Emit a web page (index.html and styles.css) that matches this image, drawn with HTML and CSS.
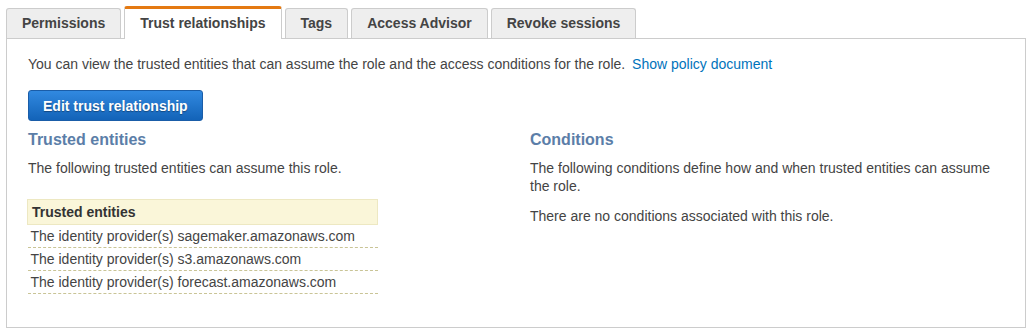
FILE: index.html
```html
<!DOCTYPE html>
<html lang="en">
  <head>
    <meta charset="UTF-8" />
    <title>Role - Trust relationships</title>
    <link rel="stylesheet" href="styles.css">
  </head>
  <body>
    <div class="page">
      <!-- Tab strip -->
      <ul class="tabs">
        <li class="tab">Permissions</li>
        <li class="tab active">Trust relationships</li>
        <li class="tab">Tags</li>
        <li class="tab">Access Advisor</li>
        <li class="tab">Revoke sessions</li>
      </ul>

      <!-- Tab panel -->
      <div class="panel">
        <p class="intro">
          You can view the trusted entities that can assume the role and the access conditions for the role.
          <a href="#" class="link">Show policy document</a>
        </p>

        <button class="btn-primary">Edit trust relationship</button>

        <div class="columns">
          <div class="col">
            <h3 class="section-title">Trusted entities</h3>
            <p>The following trusted entities can assume this role.</p>

            <table class="entities">
              <thead>
                <tr><th>Trusted entities</th></tr>
              </thead>
              <tbody>
                <tr><td>The identity provider(s) sagemaker.amazonaws.com</td></tr>
                <tr><td>The identity provider(s) s3.amazonaws.com</td></tr>
                <tr><td>The identity provider(s) forecast.amazonaws.com</td></tr>
              </tbody>
            </table>
          </div>

          <div class="col">
            <h3 class="section-title">Conditions</h3>
            <p>The following conditions define how and when trusted entities can assume the role.</p>
            <p>There are no conditions associated with this role.</p>
          </div>
        </div>
      </div>
    </div>
  </body>
</html>
```

FILE: styles.css
```css
body {
  margin: 0;
  font-family: "Liberation Sans", Arial, sans-serif;
  font-size: 14px;
  color: #444;
  background: #fff;
}
.page {
  padding: 6px 6px 0 6px;
  width: 1020px;
}
/* Tabs */
.tabs {
  display: flex;
  gap: 3px;
  margin: 0;
  padding: 0;
  list-style: none;
  align-items: flex-end;
}
.tab {
  height: 29px;
  line-height: 29px;
  padding: 0 15px;
  background: #eee;
  border: 1px solid #ccc;
  border-bottom: none;
  border-radius: 3px 3px 0 0;
  font-weight: bold;
  color: #444;
}
.tab.active {
  height: 29px;
  line-height: 28px;
  background: #fff;
  border-top: 3px solid #e47911;
  margin-bottom: -1px;
  padding-bottom: 1px;
  position: relative;
}
/* Panel */
.panel {
  border: 1px solid #ccc;
  padding: 10px 21px 0 21px;
  box-sizing: border-box;
  height: 290px;
}
.intro {
  margin: 6px 0 17px 0;
  line-height: 18px;
}
.link {
  color: #0073bb;
  text-decoration: none;
  margin-left: 3px;
}
.btn-primary {
  display: block;
  height: 31px;
  padding: 0 14px;
  border: 1px solid #1a5da8;
  border-radius: 3px;
  background: linear-gradient(to bottom, #3189e0 0%, #1363b8 100%);
  color: #fff;
  font-family: inherit;
  font-size: 14px;
  font-weight: bold;
  text-shadow: 0 1px 1px rgba(0, 0, 0, 0.35);
}
/* Two columns */
.columns {
  display: grid;
  grid-template-columns: 475px 475px;
  gap: 27px;
}
.section-title {
  margin: 9px 0 9px 0;
  font-size: 16px;
  font-weight: bold;
  color: #5b7ea8;
  line-height: 20px;
}
.col p {
  margin: 0 0 12px 0;
  line-height: 18px;
}
/* Entities table */
.entities {
  width: 351px;
  border-collapse: collapse;
  margin: 22px 0 0 -1px;
}
.entities th {
  text-align: left;
  padding: 0 4px;
  height: 24px;
  background: #faf6d9;
  border: 1px solid #ede8c2;
  color: #333;
}
.entities td {
  padding: 0 3px;
  height: 22px;
  border-bottom: 1px dashed #c9c496;
}
```
